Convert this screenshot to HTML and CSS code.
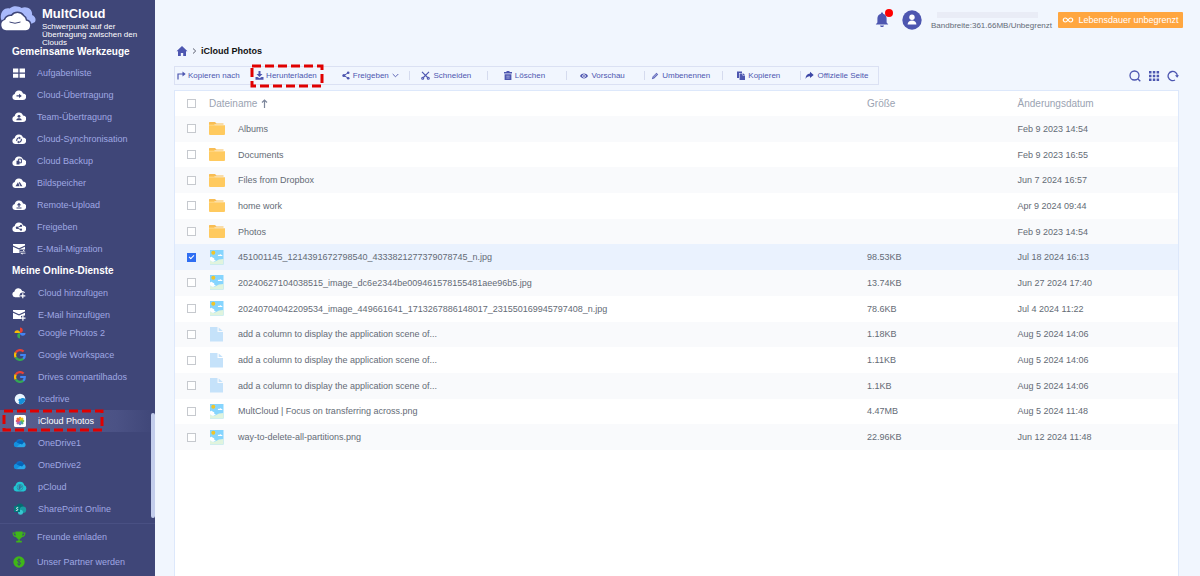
FILE: index.html
```html
<!DOCTYPE html>
<html lang="de">
<head>
<meta charset="utf-8">
<meta name="viewport" content="width=device-width, initial-scale=1">
<title>MultCloud – iCloud Photos</title>
<link rel="stylesheet" href="styles.css">
</head>
<body>
<svg class="sprite" aria-hidden="true">
  <symbol id="cloud" viewBox="0 0 14 11"><path d="M3.4 10.5A3.1 3.1 0 0 1 2.7 4.4 4.3 4.3 0 0 1 11 3.9 3.3 3.3 0 0 1 10.8 10.5Z" fill="#fff"/></symbol>
  <symbol id="google" viewBox="0 0 12 12">
    <path d="M1.7 3.6A5 5 0 0 1 9.6 2.6" fill="none" stroke="#ea4335" stroke-width="2.2"/>
    <path d="M1.7 8.4A5 5 0 0 1 1.7 3.6" fill="none" stroke="#fbbc05" stroke-width="2.2"/>
    <path d="M9.4 9.6A5 5 0 0 1 1.7 8.4" fill="none" stroke="#34a853" stroke-width="2.2"/>
    <path d="M6.2 6H10.8A5 5 0 0 1 9.2 9.8" fill="none" stroke="#4285f4" stroke-width="2.2"/>
  </symbol>
  <symbol id="onedrive" viewBox="0 0 13 9">
    <path d="M3 8.5A2.7 2.7 0 0 1 2.6 3.3 4 4 0 0 1 9.6 2.6L7 6Z" fill="#0f6cc4"/>
    <path d="M2.5 3.3 8 5.8 3 8.5A2.7 2.7 0 0 1 2.5 3.3Z" fill="#1490df"/>
    <path d="M3 8.5 9.2 3.4A2.7 2.7 0 0 1 10.3 8.5Z" fill="#28a8ea"/>
    <path d="M3.8 4.3A4 4 0 0 1 10.4 3.5L8.4 5.8Z" fill="#0364b8"/>
  </symbol>
  <symbol id="folder" viewBox="0 0 16 14"><path d="M.5 .5H6L7.500 2H14.500V3H0V1Z" fill="#f8bd55"/><path d="M0 3.800H16V12.500A1 1 0 0 1 15 13.500H1A1 1 0 0 1 0 12.500Z" fill="#ffca5f"/><path d="M0 2.500H5L6 3.800H0Z" fill="#ffca5f"/></symbol>
  <symbol id="image" viewBox="0 0 14 15">
    <path d="M0 0H13.500V14.500H0Z" fill="#86d5fe"/><path d="M0 10.500 4 12 9 9.500 13.500 9V14.500H0Z" fill="#e0f4de"/>
    <circle cx="3.300" cy="2.800" r="2" fill="#f0c52a"/>
    <path d="M0 7.500C1 6.300 2.300 6.700 2.700 7.700 4 7.500 4.800 8.700 4.200 9.800L6 10.800 3 12 0 10.500Z" fill="#fff"/>
    <path d="M7.800 6C7.800 4.700 9 4.600 9.400 4.900 10 3.900 11.300 4.200 11.500 5 12.300 5 12.500 5.500 12.400 6Z" fill="#fff"/>
  </symbol>
  <symbol id="file" viewBox="0 0 14 15"><path d="M0 0H7.500V5H13V14.500H0Z" fill="#c5e2fa"/><path d="M8.700 .5 12.700 4H8.700Z" fill="#c5e2fa"/></symbol>
</svg>

<div class="app">
  <aside class="sidebar">
    <div class="brand">
      <svg class="brand-mark" viewBox="0 0 36 26" aria-hidden="true">
        <path d="M1 13C-.5 6 5 1 9.500 2.500 14-1 19 .5 21.500 2 27-.5 33 3.500 32 9 35 10 36.500 13.500 35 16L31 18H3Z" fill="#a9b9fb"/>
        <path d="M6 25A6 6 0 0 1 4.500 13.400 7 7 0 0 1 11.500 9.300 7.500 7.500 0 0 1 23.500 9.300 6 6 0 0 1 26.500 14 5.600 5.600 0 0 1 26 25Z" fill="#fff" stroke="#3f4678" stroke-width="1.500"/>
        <path d="M9.500 16Q15 18.500 20.500 16" fill="none" stroke="#3f4678" stroke-width="1"/>
      </svg>
      <div>
        <div class="brand-name">MultCloud</div>
        <div class="brand-tag">Schwerpunkt auf der Übertragung zwischen den Clouds</div>
      </div>
    </div>

    <h2 class="side-title side-title-first">Gemeinsame Werkzeuge</h2>
    <nav class="side-list" aria-label="Gemeinsame Werkzeuge">
      <a class="side-link" href="#"><svg class="side-icon" viewBox="0 0 14 12"><path d="M1 1.500H6.300V5.500H1ZM7.600 1.500H13V5.500H7.600ZM1 6.800H6.300V10.800H1ZM7.600 6.800H13V10.800H7.600Z" fill="#fff"/></svg>Aufgabenliste</a>
      <a class="side-link" href="#"><svg class="side-icon" viewBox="0 0 14 11"><use href="#cloud"/><path d="M4.500 5.700H7V4.200L9.800 6.400 7 8.600V7.100H4.500Z" fill="#3f4678"/></svg>Cloud-Übertragung</a>
      <a class="side-link" href="#"><svg class="side-icon" viewBox="0 0 14 11"><use href="#cloud"/><circle cx="7" cy="4.800" r="1.400" fill="#3f4678"/><path d="M4.300 8.800C4.300 6.200 9.700 6.200 9.700 8.800Z" fill="#3f4678"/></svg>Team-Übertragung</a>
      <a class="side-link" href="#"><svg class="side-icon" viewBox="0 0 14 11"><use href="#cloud"/><path d="M4.800 7.500C4.200 5.500 6 4 7.500 4.300M9.300 5.300C9.800 7.300 8.200 9 6.500 8.500" fill="none" stroke="#3f4678" stroke-width="1.100"/><path d="M7.200 2.900 9 4.500 7 5.700ZM6.900 7.200V10L5 8.500Z" fill="#3f4678"/></svg>Cloud-Synchronisation</a>
      <a class="side-link" href="#"><svg class="side-icon" viewBox="0 0 14 11"><use href="#cloud"/><path d="M6.400 3.600H9.400V7.300H6.400Z" fill="none" stroke="#3f4678"/><path d="M4.500 5.200H7.500V9H4.500Z" fill="#3f4678"/></svg>Cloud Backup</a>
      <a class="side-link" href="#"><svg class="side-icon" viewBox="0 0 14 11"><use href="#cloud"/><path d="M3.500 8.700 6 4.800 7.600 8.700ZM7.600 4.300 10.400 8.700H8.500L7 5.500Z" fill="#3f4678"/></svg>Bildspeicher</a>
      <a class="side-link" href="#"><svg class="side-icon" viewBox="0 0 14 11"><use href="#cloud"/><path d="M7 3.200 9.200 5.700H7.600V7.500H6.400V5.700H4.800ZM4.500 7.900H9.500V8.900H4.500Z" fill="#3f4678"/></svg>Remote-Upload</a>
      <a class="side-link" href="#"><svg class="side-icon" viewBox="0 0 14 11"><use href="#cloud"/><path d="M9 4.300 5 6.300 9 8.300" fill="none" stroke="#3f4678" stroke-width=".9"/><circle cx="5" cy="6.300" r="1.200" fill="#3f4678"/><circle cx="9" cy="4.400" r="1.100" fill="#3f4678"/><circle cx="9" cy="8.200" r="1.100" fill="#3f4678"/></svg>Freigeben</a>
      <a class="side-link" href="#"><svg class="side-icon" viewBox="0 0 14 12"><path d="M1 1H13V2.500L7 5.200 1 2.500ZM1 3.800 7 6.500 13 3.800V6.500H7.500V10H1Z" fill="#fff"/><path d="M8 8H11V6.800L13.500 8.500H8ZM13.500 10.500H10.500V11.800L8 9.800H13.500Z" fill="#fff"/></svg>E-Mail-Migration</a>
    </nav>

    <h2 class="side-title">Meine Online-Dienste</h2>
    <nav class="side-list" aria-label="Hinzufügen">
      <a class="side-link side-link-add" href="#"><svg class="side-icon" viewBox="0 0 14 12"><use href="#cloud" width="13" height="11"/><circle cx="10.800" cy="8.600" r="3.200" fill="#3f4678"/><path d="M10.800 6.300V11.300M8.300 8.800H13.300" stroke="#fff" stroke-width="1.200"/></svg>Cloud hinzufügen</a>
      <a class="side-link side-link-add" href="#"><svg class="side-icon" viewBox="0 0 14 12"><path d="M1 1H13V2.500L7 5.200 1 2.500ZM1 3.800 7 6.500 13 3.800V6.500L9 7V10H1Z" fill="#fff"/><path d="M10.900 6.500V11.700M8.300 9.100H13.500" stroke="#fff" stroke-width="1.200"/></svg>E-Mail hinzufügen</a>
    </nav>
    <div class="services">
      <nav class="side-list" aria-label="Meine Online-Dienste">
        <a class="side-link side-link-service" href="#"><svg class="side-icon" viewBox="-1 0 14 12"><path d="M6 .5A2.750 2.750 0 0 1 6 6Z" fill="#ea4335"/><path d="M.5 6A2.750 2.750 0 0 1 6 6Z" fill="#fbbc05"/><path d="M6 11.500A2.750 2.750 0 0 1 6 6Z" fill="#34a853"/><path d="M11.500 6A2.750 2.750 0 0 1 6 6Z" fill="#4285f4"/></svg>Google Photos 2</a>
        <a class="side-link side-link-service" href="#"><svg class="side-icon" viewBox="-1 0 14 12"><use href="#google" width="12" height="12"/></svg>Google Workspace</a>
        <a class="side-link side-link-service" href="#"><svg class="side-icon" viewBox="-1 0 14 12"><use href="#google" width="12" height="12"/></svg>Drives compartilhados</a>
        <a class="side-link side-link-service" href="#"><svg class="side-icon" viewBox="-1 0 14 12"><circle cx="6" cy="6" r="5.300" fill="#e9f5ff"/><path d="M11.300 6A5.300 5.300 0 0 1 6 11.300C4.500 11 4.200 9.300 5.300 8.600 3.500 7.500 5 5.300 6.500 6 7.300 4.800 9.800 4.500 11.300 6Z" fill="#168fd8"/></svg>Icedrive</a>
        <a class="side-link side-link-service side-link-active" href="#" aria-current="page"><svg class="side-icon" viewBox="-1 0 14 12"><rect x="0" y="0" width="12" height="12" rx="1.500" fill="#fff"/><g stroke-width="2.600" stroke-linecap="round"><path d="M6 4.300V3" stroke="#f8a51b"/><path d="M7.200 4.800 8.200 3.800" stroke="#e8c81e"/><path d="M7.700 6H9" stroke="#8fc543"/><path d="M7.200 7.200 8.200 8.200" stroke="#46ad8c"/><path d="M6 7.700V9" stroke="#5c8fd6"/><path d="M4.800 7.200 3.800 8.200" stroke="#a06cb8"/><path d="M4.300 6H3" stroke="#e0557d"/><path d="M4.800 4.800 3.800 3.800" stroke="#f0643a"/></g></svg>iCloud Photos<svg class="marker" aria-hidden="true"><rect width="100%" height="100%"/></svg></a>
        <a class="side-link side-link-service" href="#"><svg class="side-icon" viewBox="0 -1 13 11"><use href="#onedrive" width="13" height="9"/></svg>OneDrive1</a>
        <a class="side-link side-link-service" href="#"><svg class="side-icon" viewBox="0 -1 13 11"><use href="#onedrive" width="13" height="9"/></svg>OneDrive2</a>
        <a class="side-link side-link-service" href="#"><svg class="side-icon" viewBox="0 0 14 11"><path d="M3.400 10A3.100 3.100 0 0 1 2.500 4 4.500 4.500 0 0 1 11.300 3.700 3.300 3.300 0 0 1 10.800 10Z" fill="#20c5d2"/><circle cx="7" cy="5.800" r="2.900" fill="none" stroke="#3f6a8c" stroke-width=".6"/><path d="M6.200 8V4.300H7.200A1.100 1.100 0 0 1 7.200 6.500H6.200" fill="none" stroke="#3f4678" stroke-width=".8"/></svg>pCloud</a>
        <a class="side-link side-link-service" href="#"><svg class="side-icon" viewBox="0 0 14 12"><circle cx="7" cy="4" r="3.500" fill="#036c70"/><circle cx="10" cy="6.800" r="3.200" fill="#1a9ba1"/><circle cx="7.500" cy="9.300" r="2.500" fill="#37c6d0"/><rect x="1" y="3" width="6" height="6" rx=".6" fill="#03787c"/><path d="M5.200 4.600C3.500 4 3 5.500 4.100 5.900 5.500 6.300 4.800 8 2.900 7.300" fill="none" stroke="#fff" stroke-width=".9"/></svg>SharePoint Online</a>
      </nav>
      <div class="side-scroll"></div>
    </div>
    <nav class="side-foot" aria-label="Programme">
      <a class="side-link side-link-foot" href="#"><svg class="side-icon" viewBox="0 0 14 12"><path d="M3.500 .5H10.500V1.500H13.500C13.500 4.500 12 6 9.800 6.300 9.300 7.300 8.500 7.800 7.700 8V9.800H9.800V11.500H4.200V9.800H6.300V8C5.500 7.800 4.700 7.300 4.200 6.300 2 6 .5 4.500 .5 1.500H3.500ZM1.600 2.600C1.800 4 2.500 4.700 3.700 5L3.400 2.600ZM12.400 2.600H10.600L10.300 5C11.500 4.700 12.200 4 12.400 2.600Z" fill="#3fb618" fill-rule="evenodd"/></svg>Freunde einladen</a>
      <a class="side-link side-link-foot" href="#"><svg class="side-icon" viewBox="0 0 14 12"><circle cx="7" cy="6" r="5.700" fill="#3fb618"/><path d="M8.700 4.300C7.500 3 5.300 3.500 5.500 4.800 5.700 6.200 8.600 5.600 8.600 7.300 8.500 8.900 6 8.800 5.200 7.600M7 2.300V9.800" fill="none" stroke="#3f4678" stroke-width=".9"/></svg>Unser Partner werden</a>
    </nav>
  </aside>

  <main class="main">
    <header class="topbar">
      <button class="icon-button bell" type="button" aria-label="Benachrichtigungen">
        <svg width="14" height="16" viewBox="0 0 14 16"><path d="M7 .5C7.800 .5 8.100 1 8.100 1.700 10.500 2.300 11.600 4.200 11.600 6.500V10.500L13.300 12.500H.7L2.400 10.500V6.500C2.400 4.200 3.500 2.300 5.900 1.700 5.900 1 6.200 .5 7 .5ZM5 13.500H9C8.700 15.500 5.300 15.500 5 13.500Z" fill="#4d56b0"/></svg>
        <span class="bell-dot"></span>
      </button>
      <button class="icon-button" type="button" aria-label="Konto">
        <svg width="20" height="20" viewBox="0 0 20 20"><circle cx="10" cy="10" r="9.700" fill="#4d56b0"/><circle cx="10" cy="7.300" r="2.700" fill="#fff"/><path d="M5.600 14.500C5.600 9.200 14.400 9.200 14.400 14.500Z" fill="#fff"/></svg>
      </button>
      <div class="account">
        <span class="account-name"></span>
        <span>Bandbreite:361.66MB/Unbegrenzt</span>
      </div>
      <button class="upgrade" type="button"><svg width="12" height="8" viewBox="0 0 12 8"><path d="M6 4C4.800 2.200 4 2 3.300 2A2 2 0 0 0 3.300 6C4 6 4.800 5.800 6 4 7.200 2.200 8 2 8.700 2A2 2 0 0 1 8.700 6C8 6 7.200 5.800 6 4Z" fill="none" stroke="#fff" stroke-width="1.200"/></svg>Lebensdauer unbegrenzt</button>
    </header>

    <nav class="crumbs" aria-label="Pfad">
      <a href="#" aria-label="Start"><svg width="12" height="10" viewBox="0 0 12 10"><path d="M6 0 11.500 5.300H10V10H7.200V7H4.800V10H2V5.300H.5Z" fill="#4d56b0"/></svg></a>
      <svg width="5" height="8" viewBox="0 0 5 8"><path d="M1 1.500 3.700 4 1 6.500" fill="none" stroke="#5c6070"/></svg>
      <strong>iCloud Photos</strong>
    </nav>

    <div class="tools">
      <div class="toolbar">
        <button class="tool tool-start" type="button"><svg width="9" height="9" viewBox="0 0 9 9"><path d="M1 8.500V3H6" fill="none" stroke="#4d56b0" stroke-width="1.200"/><path d="M5.500 .5 8.700 3 5.500 5.500Z" fill="#4d56b0"/></svg>Kopieren nach</button>
        <button class="tool tool-start" type="button"><svg width="9" height="9" viewBox="0 0 9 9"><path d="M3.500 0H5.500V3H7.500L4.500 6 1.500 3H3.500ZM.5 6H2.500L4.500 7.300 6.500 6H8.500V8.700H.5Z" fill="#4d56b0"/></svg>Herunterladen<svg class="marker" aria-hidden="true"><rect width="100%" height="100%"/></svg></button>
        <button class="tool tool-menu" type="button"><svg width="8" height="9" viewBox="0 0 8 9"><path d="M6.200 1.800 1.800 4.500 6.200 7.200" fill="none" stroke="#4d56b0"/><circle cx="1.800" cy="4.500" r="1.500" fill="#4d56b0"/><circle cx="6.200" cy="1.800" r="1.300" fill="#4d56b0"/><circle cx="6.200" cy="7.200" r="1.300" fill="#4d56b0"/></svg>Freigeben<svg width="7" height="5" viewBox="0 0 7 5"><path d="M.7 1 3.500 3.800 6.300 1" fill="none" stroke="#5d65b5"/></svg></button>
        <button class="tool tool-divided" type="button"><svg width="9" height="9" viewBox="0 0 9 9"><g fill="none" stroke="#4d56b0" stroke-width="1.100"><path d="M1 .8 6.600 6.500M8 .8 2.400 6.500"/><circle cx="1.700" cy="7.200" r="1"/><circle cx="7.300" cy="7.200" r="1"/></g></svg>Schneiden</button>
        <button class="tool tool-divided" type="button"><svg width="8" height="9" viewBox="0 0 8 9"><path d="M2.500 0H5.500V1H8V2.500H0V1H2.500ZM.6 3.200H7.400V9H.6Z" fill="#4d56b0"/><path d="M2.300 5.200H5.700M2.300 7H5.700" stroke="#c7cdee" stroke-width=".7"/></svg>Löschen</button>
        <button class="tool tool-divided" type="button"><svg width="8" height="8" viewBox="0 0 8 8"><path d="M0 4C2 .8 6 .8 8 4 6 7.200 2 7.200 0 4Z" fill="#4d56b0"/><circle cx="4" cy="4" r="1.400" fill="none" stroke="#fff" stroke-width=".8"/></svg>Vorschau</button>
        <button class="tool tool-divided" type="button"><svg width="8" height="8" viewBox="0 0 8 8"><path d="M.8 7.200 1.500 4.800 5.500 .8 7.200 2.500 3.200 6.500Z" fill="#5f68ba"/><path d="M2.200 5.500 5.700 2" stroke="#dde3f7" stroke-width=".6"/></svg>Umbenennen</button>
        <button class="tool tool-divided" type="button"><svg width="8" height="9" viewBox="0 0 8 9"><path d="M0 .5H5V2H2V7H0Z" fill="#4d56b0"/><path d="M2.600 2.500H5.500V4.500H8V9H2.600ZM6 2.300 8 4H6Z" fill="#4d56b0"/></svg>Kopieren</button>
        <button class="tool tool-divided" type="button"><svg width="9" height="9" viewBox="0 0 9 9"><path d="M5 .8 8.700 4 5 7V5.300C3 5.200 1.500 6.200 .5 8 .6 4.500 2.300 2.800 5 2.500Z" fill="#3d47a6"/></svg>Offizielle Seite</button>
      </div>
      <div class="view-actions">
        <button class="icon-button" type="button" aria-label="Suchen"><svg width="12" height="12" viewBox="0 0 12 12"><circle cx="5.500" cy="5.500" r="4.500" fill="none" stroke="#4d56b0" stroke-width="1.300"/><path d="M8.700 8.700 11.300 11.300" stroke="#4d56b0" stroke-width="1.300"/></svg></button>
        <button class="icon-button" type="button" aria-label="Rasteransicht"><svg width="12" height="12" viewBox="0 0 12 12"><path d="M1 1H3.500V3.500H1ZM4.800 1H7.300V3.500H4.800ZM8.600 1H11.100V3.500H8.600ZM1 4.800H3.500V7.300H1ZM4.800 4.800H7.300V7.300H4.800ZM8.600 4.800H11.100V7.300H8.600ZM1 8.600H3.500V11.100H1ZM4.800 8.600H7.300V11.100H4.800ZM8.600 8.600H11.100V11.100H8.600Z" fill="#4d56b0"/></svg></button>
        <button class="icon-button" type="button" aria-label="Aktualisieren"><svg width="12" height="12" viewBox="0 0 12 12"><path d="M8 10A4.600 4.600 0 1 1 10.300 6" fill="none" stroke="#4d56b0" stroke-width="1.300"/><path d="M8 5.300H12L10.200 7.800Z" fill="#4d56b0"/></svg></button>
      </div>
    </div>

    <section class="panel">
      <table class="files">
        <colgroup><col class="col-check"><col class="col-icon"><col><col class="col-size"><col class="col-date"></colgroup>
        <thead>
          <tr><th><input class="check" type="checkbox" aria-label="Alle auswählen"></th><th colspan="2"><span class="sort">Dateiname<svg width="7" height="9" viewBox="0 0 7 9"><path d="M3.500 9V1M1 3.500 3.500 1 6 3.500" fill="none" stroke="#7d879c" stroke-width="1.200"/></svg></span></th><th>Größe</th><th>Änderungsdatum</th></tr>
        </thead>
        <tbody>
          <tr><td><input class="check" type="checkbox" id="f1"></td><td><svg class="type" viewBox="0 0 16 14"><use href="#folder"/></svg></td><td><label for="f1">Albums</label></td><td></td><td>Feb 9 2023 14:54</td></tr>
          <tr><td><input class="check" type="checkbox" id="f2"></td><td><svg class="type" viewBox="0 0 16 14"><use href="#folder"/></svg></td><td><label for="f2">Documents</label></td><td></td><td>Feb 9 2023 16:55</td></tr>
          <tr><td><input class="check" type="checkbox" id="f3"></td><td><svg class="type" viewBox="0 0 16 14"><use href="#folder"/></svg></td><td><label for="f3">Files from Dropbox</label></td><td></td><td>Jun 7 2024 16:57</td></tr>
          <tr><td><input class="check" type="checkbox" id="f4"></td><td><svg class="type" viewBox="0 0 16 14"><use href="#folder"/></svg></td><td><label for="f4">home work</label></td><td></td><td>Apr 9 2024 09:44</td></tr>
          <tr><td><input class="check" type="checkbox" id="f5"></td><td><svg class="type" viewBox="0 0 16 14"><use href="#folder"/></svg></td><td><label for="f5">Photos</label></td><td></td><td>Feb 9 2023 14:54</td></tr>
          <tr class="selected"><td><input class="check" type="checkbox" id="f6" checked></td><td><svg class="type" viewBox="0 0 14 15"><use href="#image"/></svg></td><td><label for="f6">451001145_1214391672798540_4333821277379078745_n.jpg</label></td><td>98.53KB</td><td>Jul 18 2024 16:13</td></tr>
          <tr><td><input class="check" type="checkbox" id="f7"></td><td><svg class="type" viewBox="0 0 14 15"><use href="#image"/></svg></td><td><label for="f7">20240627104038515_image_dc6e2344be009461578155481aee96b5.jpg</label></td><td>13.74KB</td><td>Jun 27 2024 17:40</td></tr>
          <tr><td><input class="check" type="checkbox" id="f8"></td><td><svg class="type" viewBox="0 0 14 15"><use href="#image"/></svg></td><td><label for="f8">20240704042209534_image_449661641_1713267886148017_231550169945797408_n.jpg</label></td><td>78.6KB</td><td>Jul 4 2024 11:22</td></tr>
          <tr><td><input class="check" type="checkbox" id="f9"></td><td><svg class="type" viewBox="0 0 14 15"><use href="#file"/></svg></td><td><label for="f9">add a column to display the application scene of...</label></td><td>1.18KB</td><td>Aug 5 2024 14:06</td></tr>
          <tr><td><input class="check" type="checkbox" id="f10"></td><td><svg class="type" viewBox="0 0 14 15"><use href="#file"/></svg></td><td><label for="f10">add a column to display the application scene of...</label></td><td>1.11KB</td><td>Aug 5 2024 14:06</td></tr>
          <tr><td><input class="check" type="checkbox" id="f11"></td><td><svg class="type" viewBox="0 0 14 15"><use href="#file"/></svg></td><td><label for="f11">add a column to display the application scene of...</label></td><td>1.1KB</td><td>Aug 5 2024 14:06</td></tr>
          <tr><td><input class="check" type="checkbox" id="f12"></td><td><svg class="type" viewBox="0 0 14 15"><use href="#image"/></svg></td><td><label for="f12">MultCloud | Focus on transferring across.png</label></td><td>4.47MB</td><td>Aug 5 2024 11:48</td></tr>
          <tr><td><input class="check" type="checkbox" id="f13"></td><td><svg class="type" viewBox="0 0 14 15"><use href="#image"/></svg></td><td><label for="f13">way-to-delete-all-partitions.png</label></td><td>22.96KB</td><td>Jun 12 2024 11:48</td></tr>
        </tbody>
      </table>
    </section>
  </main>
</div>
</body>
</html>
```

FILE: styles.css
```css
*, *::before, *::after {
  box-sizing: border-box;
}

body {
  margin: 0;
  font: 9px/12px "Liberation Sans", Arial, sans-serif;
  color: #646b76;
  background: #f1f6fe;
}

button {
  padding: 0;
  border: 0;
  background: none;
  font: inherit;
  color: inherit;
  cursor: pointer;
}

svg {
  flex: none;
}

.sprite {
  display: none;
}

.app {
  display: flex;
  min-height: 100vh;
}

/* Sidebar */
.sidebar {
  width: 155px;
  flex: none;
  background: #3f4678;
}

.brand {
  display: flex;
  gap: 6px;
  height: 47px;
  padding-top: 6px;
  color: #fff;
}

.brand-mark {
  width: 36px;
  height: 26px;
}

.brand-name {
  margin-bottom: 2px;
  font-size: 13px;
  font-weight: 700;
  line-height: 15px;
}

.brand-tag {
  font-size: 8px;
  line-height: 8px;
}

.side-title {
  margin: 0;
  padding-left: 12px;
  font-size: 10px;
  line-height: 22px;
  color: #fff;
  white-space: nowrap;
}

.side-title-first {
  margin-bottom: 5px;
  line-height: 10px;
}

.side-link {
  position: relative;
  display: flex;
  align-items: center;
  gap: 11px;
  height: 22px;
  padding-left: 12px;
  color: #9fa8e3;
  text-decoration: none;
  white-space: nowrap;
}

.side-link-add {
  gap: 12px;
}

.side-link-service {
  padding-left: 13px;
}

.side-link-foot {
  height: 25px;
}

.side-link-active {
  color: #fff;
  background: linear-gradient(90deg, #5b6190, #4b5285 75%, #3f4678);
}

.side-icon {
  width: 14px;
  height: 12px;
}

.services {
  position: relative;
  margin-top: -4px;
}

.side-scroll {
  position: absolute;
  right: 0;
  bottom: 2px;
  width: 4px;
  height: 105px;
  border-radius: 2px;
  background: #c3cdec;
}

.side-foot {
  margin-top: 3px;
  border-top: 1px solid #495083;
}

/* Dashed highlight drawn over a control */
.marker {
  position: absolute;
  overflow: visible;
  pointer-events: none;
}

.marker rect {
  fill: none;
  stroke: #e00000;
  stroke-width: 3;
  stroke-dasharray: 9 4;
}

.side-link .marker {
  top: 1px;
  left: 4px;
  width: 98px;
  height: 19px;
}

.tool .marker {
  top: -1px;
  left: -1px;
  width: 70px;
  height: 20px;
}

/* Main area */
.main {
  display: flex;
  flex: 1;
  flex-direction: column;
  min-width: 0;
  padding: 0 21px 0 19px;
}

.topbar {
  display: flex;
  align-items: center;
  justify-content: flex-end;
  height: 39px;
  margin-right: -4px;
}

.icon-button {
  position: relative;
  display: flex;
}

.bell {
  margin-right: 13px;
}

.bell-dot {
  position: absolute;
  top: -3px;
  right: -4px;
  width: 8px;
  height: 8px;
  border-radius: 50%;
  background: #f00;
}

.account {
  display: flex;
  flex-direction: column;
  margin: 4px 6px 0 9px;
  font-size: 8px;
}

.account-name {
  height: 6px;
  margin: 0 14px 2px 6px;
  background: #e9ecf6;
}

.upgrade {
  display: flex;
  align-items: center;
  justify-content: center;
  gap: 4px;
  width: 125px;
  height: 16px;
  border-radius: 1px;
  color: #fff;
  background: #ffa63f;
}

.crumbs {
  display: flex;
  align-items: center;
  gap: 4px;
  height: 24px;
  padding-left: 2px;
  color: #111;
}

.crumbs a {
  display: flex;
}

.tools {
  display: flex;
  align-items: center;
  justify-content: space-between;
  margin: 3px 0 5px;
}

.toolbar {
  display: grid;
  flex: 0 1 705px;
  grid-template-columns: repeat(9, 1fr);
  border: 1px solid #dbe1f3;
}

.tool {
  position: relative;
  display: flex;
  align-items: center;
  justify-content: center;
  gap: 3px;
  height: 17px;
  padding-right: 4px;
  font-size: 8px;
  color: #4d56b0;
  white-space: nowrap;
}

.tool-start {
  justify-content: flex-start;
  gap: 2px;
  padding: 0 0 0 2px;
}

.tool-menu {
  padding: 0;
}

.tool-divided::before {
  content: "";
  position: absolute;
  top: 4px;
  left: 0;
  width: 1px;
  height: 9px;
  background: #d5dbee;
}

.view-actions {
  display: flex;
  gap: 7px;
}

.panel {
  flex: 1;
  border: 1px solid #dde8fb;
  border-bottom: 0;
  background: #fff;
}

.files {
  width: 100%;
  height: 359px;
  border-collapse: collapse;
  table-layout: fixed;
}

.files thead tr {
  height: 25px;
}

.col-check {
  width: 34px;
}

.col-icon {
  width: 29px;
}

.col-size {
  width: 15%;
}

.col-date {
  width: 16%;
}

.files th,
.files td {
  padding: 0;
  text-align: left;
  vertical-align: middle;
  white-space: nowrap;
}

.files th {
  font-size: 10px;
  font-weight: 400;
  color: #9ba3b2;
}

.files th:first-child,
.files td:first-child {
  padding-left: 12px;
}

.files tbody tr:nth-child(odd) {
  background: #f9fafc;
}

.files tbody .selected {
  background: #eaf2fe;
}

.sort {
  display: flex;
  align-items: center;
  gap: 4px;
}

.type {
  display: block;
  width: 16px;
  height: 15px;
}

.check {
  position: relative;
  display: block;
  width: 9px;
  height: 9px;
  margin: 0;
  border: 1px solid #c6c9ce;
  background: #fff;
  appearance: none;
}

.check:checked {
  border-color: #2f6ef2;
  background: #2f6ef2;
}

.check:checked::after {
  content: "";
  position: absolute;
  top: 0;
  left: 2px;
  width: 3px;
  height: 5px;
  border: solid #fff;
  border-width: 0 1px 1px 0;
  transform: rotate(45deg);
}
```
